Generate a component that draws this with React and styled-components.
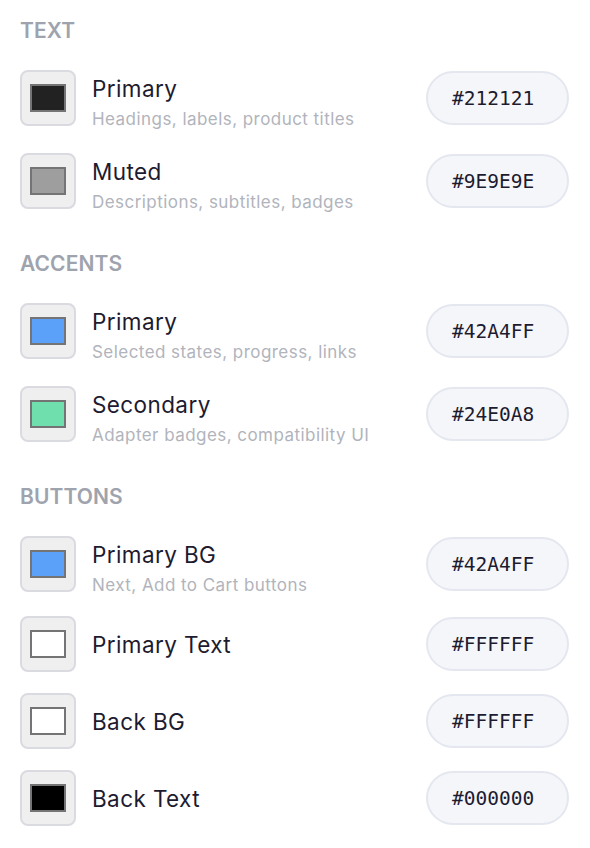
import React from "react"
import styled, { createGlobalStyle } from "styled-components"

const Global = createGlobalStyle`
  html, body {
    margin: 0;
    padding: 0;
    background: #ffffff;
  }
  body {
    font-family: Inter, "Noto Sans", sans-serif;
    -webkit-font-smoothing: antialiased;
  }
`

const S = {
  Page: styled.div`
    display: flex;
    flex-direction: column;
    gap: 39px;
    padding: 18px 21px 0 20px;
  `,
  Section: styled.section`
    display: flex;
    flex-direction: column;
  `,
  Heading: styled.h3`
    margin: 0 0 23px;
    font-size: 21px;
    line-height: 26px;
    font-weight: 600;
    color: #9ea3ad;
    letter-spacing: 0.1px;
  `,
  Rows: styled.div`
    display: flex;
    flex-direction: column;
    gap: 21px;
  `,
  Row: styled.div`
    display: flex;
    align-items: center;
    min-height: 56px;
  `,
  Swatch: styled.div`
    box-sizing: border-box;
    width: 56px;
    height: 56px;
    flex: none;
    display: flex;
    align-items: center;
    justify-content: center;
    background: #efefef;
    border: 2px solid #d9dbe0;
    border-radius: 8px;
  `,
  Chip: styled.div`
    box-sizing: border-box;
    width: 36px;
    height: 28px;
    border: 2px solid #747474;
    background: ${p => p.$color};
  `,
  Info: styled.div`
    display: flex;
    flex-direction: column;
    margin-left: 16px;
    padding-top: 2px;
  `,
  Title: styled.div`
    font-size: 22.5px;
    line-height: 40px;
    color: #1d1b2f;
    letter-spacing: 0.4px;
  `,
  Desc: styled.div`
    font-size: 17px;
    line-height: 20px;
    color: #b1b4bc;
    letter-spacing: 0.45px;
  `,
  Hex: styled.div`
    box-sizing: border-box;
    margin-left: auto;
    width: 143px;
    height: 54px;
    display: flex;
    align-items: center;
    padding-left: 24px;
    background: #f5f6fa;
    border: 2px solid #e4e7ef;
    border-radius: 27px;
    font-family: "DejaVu Sans Mono", "Liberation Mono", monospace;
    font-size: 19.5px;
    color: #1d1b2f;
  `
}

const sections = [
  {
    label: "TEXT",
    items: [
      { name: "Primary", desc: "Headings, labels, product titles", hex: "#212121", swatch: "#222222" },
      { name: "Muted", desc: "Descriptions, subtitles, badges", hex: "#9E9E9E", swatch: "#9e9e9e" }
    ]
  },
  {
    label: "ACCENTS",
    items: [
      { name: "Primary", desc: "Selected states, progress, links", hex: "#42A4FF", swatch: "#5ca1f9" },
      { name: "Secondary", desc: "Adapter badges, compatibility UI", hex: "#24E0A8", swatch: "#6fdfad" }
    ]
  },
  {
    label: "BUTTONS",
    items: [
      { name: "Primary BG", desc: "Next, Add to Cart buttons", hex: "#42A4FF", swatch: "#5ca1f9" },
      { name: "Primary Text", hex: "#FFFFFF", swatch: "#ffffff" },
      { name: "Back BG", hex: "#FFFFFF", swatch: "#ffffff" },
      { name: "Back Text", hex: "#000000", swatch: "#000000" }
    ]
  }
]

const ColorRow = ({ name, desc, hex, swatch }) => (
  <S.Row>
    <S.Swatch>
      <S.Chip $color={swatch} />
    </S.Swatch>
    <S.Info>
      <S.Title>{name}</S.Title>
      {desc && <S.Desc>{desc}</S.Desc>}
    </S.Info>
    <S.Hex>{hex}</S.Hex>
  </S.Row>
)

const App = () => (
  <>
    <Global />
    <S.Page>
      {sections.map(s => (
        <S.Section key={s.label}>
          <S.Heading>{s.label}</S.Heading>
          <S.Rows>
            {s.items.map(item => (
              <ColorRow key={item.name + item.hex} {...item} />
            ))}
          </S.Rows>
        </S.Section>
      ))}
    </S.Page>
  </>
)

export default App
